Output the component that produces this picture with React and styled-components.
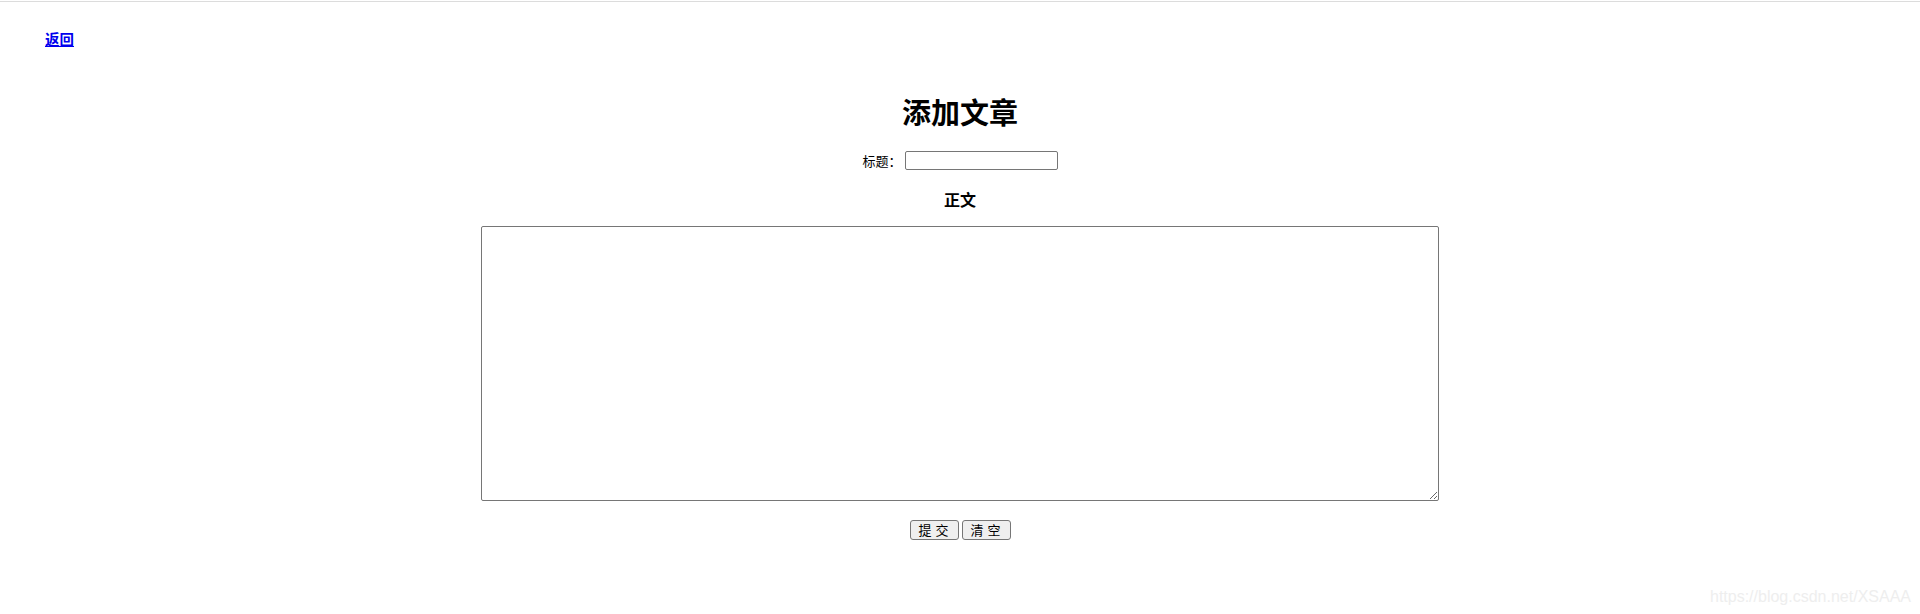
import React from 'react';
import styled, { createGlobalStyle } from 'styled-components';

const GlobalStyle = createGlobalStyle`
  html, body {
    margin: 0;
    padding: 0;
    background: #ffffff;
    font-family: "Microsoft YaHei", "Noto Sans CJK SC", "Noto Sans", sans-serif;
    color: #000;
  }
`;

// 상단 회색 선
const TopRule = styled.div`
  margin-top: 1px;
  height: 1px;
  background: #dcdcdc;
`;

const Page = styled.div`
  position: relative;
  height: 612px;
  overflow: hidden;
`;

const BackBar = styled.div`
  display: flex;
  padding: 29px 0 0 45px;
  height: 15px;
  font-size: 15px;
  line-height: 15px;
`;

const BackLink = styled.a`
  font-size: 14.5px;
  line-height: 15px;
  font-weight: bold;
  color: #0000ee;
  text-decoration: underline;
`;

const Form = styled.form`
  display: flex;
  flex-direction: column;
  align-items: center;
`;

const Title = styled.h1`
  margin: 50px 0 0;
  font-size: 29px;
  line-height: 30px;
  font-weight: bold;
`;

const Row = styled.div`
  margin-top: 25px;
  display: flex;
  align-items: center;
  gap: 3px;
  font-size: 13px;
  line-height: 19px;
`;

const TitleInput = styled.input`
  box-sizing: border-box;
  width: 153px;
  height: 19px;
  border: 1px solid #767676;
  border-radius: 2px;
  padding: 0 2px;
  margin: 0;
  font-size: 13px;
`;

const SubTitle = styled.h3`
  margin: 21px 0 0;
  font-size: 16px;
  line-height: 16px;
  font-weight: bold;
`;

const Body = styled.textarea`
  box-sizing: border-box;
  margin-top: 19px;
  width: 958px;
  height: 275px;
  border: 1px solid #767676;
  border-radius: 2px;
  padding: 2px;
  font-size: 13px;
  resize: both;
`;

const Buttons = styled.div`
  margin-top: 19px;
  display: flex;
  gap: 3px;
`;

const Button = styled.button`
  box-sizing: border-box;
  width: 49px;
  height: 20px;
  padding: 0 0 0 3px;
  background: #efefef;
  border: 1px solid #767676;
  border-radius: 3px;
  font-family: "Microsoft YaHei", "Noto Sans CJK SC", sans-serif;
  font-size: 13px;
  line-height: 18px;
  letter-spacing: 4px;
  color: #000;
`;

const Watermark = styled.div`
  position: absolute;
  right: 9px;
  bottom: 8px;
  font-family: "Liberation Sans", Arial, sans-serif;
  font-size: 16px;
  line-height: 18px;
  color: #eeeeee;
`;

export default function App() {
  return (
    <>
      <GlobalStyle />
      <TopRule />
      <Page>
        <BackBar>
          <BackLink href="#">返回</BackLink>
        </BackBar>
        <Form onSubmit={(e) => e.preventDefault()}>
          <Title>添加文章</Title>
          <Row>
            <label>标题：</label>
            <TitleInput type="text" />
          </Row>
          <SubTitle>正文</SubTitle>
          <Body />
          <Buttons>
            <Button type="submit">提交</Button>
            <Button type="reset">清空</Button>
          </Buttons>
        </Form>
        <Watermark>https://blog.csdn.net/XSAAA</Watermark>
      </Page>
    </>
  );
}
